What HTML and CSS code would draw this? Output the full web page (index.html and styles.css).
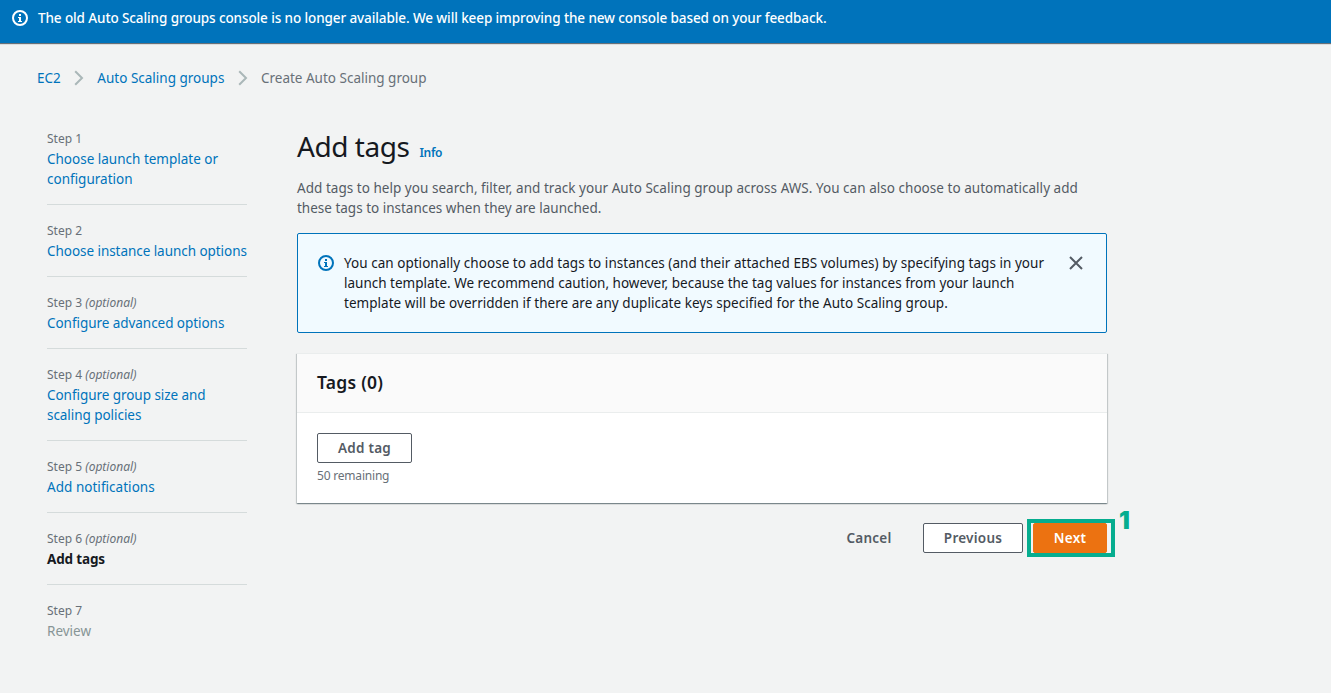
FILE: index.html
```html
<!DOCTYPE html>
<html lang="en">
<head>
<meta charset="utf-8">
<title>Create Auto Scaling group</title>
<link rel="stylesheet" href="styles.css">
</head>
<body>
<header class="banner">
  <svg class="icon" viewBox="0 0 16 16" width="16" height="16"><circle cx="8" cy="8" r="7" fill="none" stroke="currentColor" stroke-width="2"/><path d="M7 4h2v2H7zM6 7h3v4h1v1H6v-1h1V8H6z" fill="currentColor"/></svg>
  <span class="banner-text">The old Auto Scaling groups console is no longer available. We will keep improving the new console based on your feedback.</span>
</header>
<nav class="crumbs">
  <a class="crumb-ec2">EC2</a>
  <svg class="chevron" viewBox="0 0 10 16" width="10" height="16"><path d="M1.200 1.200 8 8l-6.800 6.800" fill="none" stroke="#aab7b8" stroke-width="2"/></svg>
  <a class="crumb-groups">Auto Scaling groups</a>
  <svg class="chevron" viewBox="0 0 10 16" width="10" height="16"><path d="M1.200 1.200 8 8l-6.800 6.800" fill="none" stroke="#aab7b8" stroke-width="2"/></svg>
  <span class="crumb-current">Create Auto Scaling group</span>
</nav>
<div class="layout">
  <ol class="steps">
    <li class="step"><div class="label">Step 1</div><a>Choose launch template or<br>configuration</a></li>
    <li class="step"><div class="label">Step 2</div><a class="tight">Choose instance launch options</a></li>
    <li class="step"><div class="label">Step 3 <i>(optional)</i></div><a class="tight">Configure advanced options</a></li>
    <li class="step"><div class="label">Step 4 <i>(optional)</i></div><a class="tight">Configure group size and<br>scaling policies</a></li>
    <li class="step"><div class="label">Step 5 <i>(optional)</i></div><a class="wide">Add notifications</a></li>
    <li class="step"><div class="label">Step 6 <i>(optional)</i></div><b class="active">Add tags</b></li>
    <li class="step"><div class="label">Step 7</div><span class="disabled">Review</span></li>
  </ol>
  <main class="main">
    <div class="heading"><h1>Add tags</h1><a class="info">Info</a></div>
    <p class="desc"><span class="wide">Add tags to help you search, filter, and track your Auto Scaling group across AWS. You can also choose to automatically add</span><br>these tags to instances when they are launched.</p>
    <section class="alert">
      <svg class="icon" viewBox="0 0 16 16" width="16" height="16"><circle cx="8" cy="8" r="7" fill="none" stroke="currentColor" stroke-width="2"/><path d="M7 4h2v2H7zM6 7h3v4h1v1H6v-1h1V8H6z" fill="currentColor"/></svg>
      <p class="alert-text"><span class="wide">You can optionally choose to add tags to instances (and their attached EBS volumes) by specifying tags in your</span><br>launch template. We recommend caution, however, because the tag values for instances from your launch<br><span class="wide">template will be overridden if there are any duplicate keys specified for the Auto Scaling group.</span></p>
      <svg class="close" viewBox="0 0 16 16" width="16" height="16"><path d="M2 2l12 12M14 2 2 14" fill="none" stroke="#545b64" stroke-width="2"/></svg>
    </section>
    <section class="card">
      <h2>Tags (0)</h2>
      <div class="card-body">
        <button class="btn add">Add tag</button>
        <div class="hint">50 remaining</div>
      </div>
    </section>
    <div class="actions">
      <button class="btn cancel">Cancel</button>
      <button class="btn previous">Previous</button>
      <div class="next-wrap">
        <button class="btn next">Next</button>
        <div class="highlight"></div>
        <span class="marker">1</span>
      </div>
    </div>
  </main>
</div>
</body>
</html>
```
FILE: styles.css
```css
* { box-sizing: border-box; }
body { margin: 0; height: 693px; overflow: hidden; background: #f2f3f3; color: #16191f; font: 13.5px/20px "Noto Sans", sans-serif; white-space: nowrap; }
a { color: #0073bb; }
p, h1, h2, ol { margin: 0; padding: 0; font-weight: 400; }
svg { display: block; flex: none; }
.wide { letter-spacing: 0.035px; }
.tight { letter-spacing: -0.05px; }
.banner { display: flex; gap: 10px; height: 43px; padding: 8px 12px; color: #fff; background: #0073bb; box-shadow: 0 1px 1px #687078; font-weight: 500; letter-spacing: -0.1px; }
.banner .icon { margin-top: 2px; }
.crumbs { display: flex; align-items: center; height: 20px; margin: 25px 0 0 37px; color: #687078; }
.crumbs .chevron { margin: 0 13.3px; }
.layout { display: flex; gap: 50px; padding: 41px 0 0 47px; }
.steps { width: 200px; list-style: none; }
.step { padding-bottom: 15px; border-bottom: 1px solid #d5dbdb; margin-bottom: 16px; }
.step:last-child { border: 0; }
.label { font-size: 12px; color: #687078; }
.active { font-weight: 700; letter-spacing: -0.15px; }
.disabled { color: #879596; }
.main { width: 810px; }
.heading { display: flex; align-items: baseline; gap: 10px; height: 50px; margin-top: -1px; }
h1 { font-size: 28px; line-height: 36px; letter-spacing: -0.45px; }
.info { font-size: 12px; font-weight: 600; letter-spacing: -0.3px; }
.desc { color: #545b64; }
.alert { display: flex; height: 100px; margin-top: 15px; padding: 19px 22px 0 20px; border: 1px solid #0073bb; border-radius: 2px; background: #f1faff; }
.alert .icon { margin: 2px 10px 0 0; color: #0073bb; }
.alert .close { margin: 2px 0 0 auto; }
.card { height: 150px; margin-top: 20px; background: #fff; border-top: 1px solid #eaeded; box-shadow: 0 1px 1px rgba(0,28,36,.3), 1px 1px 1px rgba(0,28,36,.15), -1px 1px 1px rgba(0,28,36,.15); }
h2 { height: 59px; padding: 17px 20px; font-size: 17.5px; line-height: 22px; font-weight: 600; letter-spacing: 0.25px; background: #fafafa; border-bottom: 1px solid #eaeded; }
.card-body { padding: 20px; }
.btn { display: block; height: 30px; padding: 0; border: 1px solid #545b64; border-radius: 2px; background: #fff; color: #545b64; font: 600 13.5px/20px "Noto Sans", sans-serif; letter-spacing: 0.25px; }
.add { width: 95px; }
.hint { margin-top: 3px; font-size: 12px; color: #687078; letter-spacing: -0.2px; }
.actions { display: flex; justify-content: flex-end; margin-top: 20px; }
.cancel { width: 86px; border-color: transparent; background: transparent; margin-right: 11px; }
.previous { width: 100px; margin-right: 10px; }
.next-wrap { position: relative; }
.next { width: 74px; color: #fff; border-color: #ec7211; background: #ec7211; }
.highlight { position: absolute; left: -6px; top: -4px; width: 88px; height: 38px; border: 4px solid #06ad8f; }
.marker { position: absolute; left: 86px; top: -14px; font: 900 24px/24px Inter, sans-serif; color: #06ad8f; }
```
